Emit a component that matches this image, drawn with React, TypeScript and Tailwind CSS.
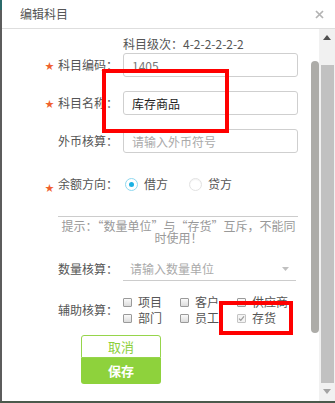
import React from 'react';

const Star = ({ low }: { low?: boolean }) => (
  <span className={`inline-block w-[8px] text-[9px] leading-[9px] text-[#f0612e] mr-[5px] ${low ? 'mt-[6px]' : ''}`}>★</span>
);

const Label = ({ text, star, low }: { text: string; star?: boolean; low?: boolean }) => (
  <div className="w-[121px] shrink-0 flex items-center justify-end pr-[5px] text-[#555]">
    {star && <Star low={low} />}
    <span>{text}</span>
  </div>
);

const Check = ({ label, checked }: { label: string; checked?: boolean }) => (
  <div className="flex items-center h-[16px]">
    <span
      className={`w-[9px] h-[9px] rounded-[1px] border flex items-center justify-center ${
        checked ? 'border-[#c4c4c4] bg-[#f4f4f4]' : 'border-[#9a9a9a] bg-gradient-to-b from-[#fafafa] to-[#dcdcdc]'
      }`}
    >
      {checked && (
        <svg width="7" height="7" viewBox="0 0 7 7">
          <path d="M1 3.6 L2.8 5.3 L6 1.4" fill="none" stroke="#9a9a9a" strokeWidth="1.2" />
        </svg>
      )}
    </span>
    <span className="ml-[6px] text-[#555]">{label}</span>
  </div>
);

export default function App() {
  return (
    <div className="relative w-[335px] h-[403px] flex flex-col overflow-hidden bg-white text-[12px] font-['Noto_Sans_CJK_SC',sans-serif]">
      <div className="flex flex-1 min-h-0">
        {/* backdrop edge */}
        <div className="w-[2px] flex flex-col">
          <div className="h-[10px] bg-[#2b6a6a]" />
          <div className="flex-1 bg-[#5c5c5c]" />
        </div>

        <div className="flex-1 flex flex-col bg-white">
          {/* header */}
          <div className="h-[29px] shrink-0 flex items-center justify-between pl-[18px] pr-[11px] border-b border-[#dedede]">
            <span className="text-[#555] text-[12px]">编辑科目</span>
            <svg width="9" height="9" viewBox="0 0 9 9">
              <path d="M1 1 L8 8 M8 1 L1 8" stroke="#b3b3b3" strokeWidth="1.7" />
            </svg>
          </div>

          <div className="flex flex-1 min-h-0">
            {/* form */}
            <div className="w-[309px] flex flex-col pt-[7px]">
              <div className="ml-[121px] h-[16px] leading-[16px] text-[#555]">科目级次：4-2-2-2-2-2</div>

              <div className="mt-[1px] flex items-center h-[24px]">
                <Label text="科目编码：" star />
                <input
                  readOnly
                  defaultValue="1405"
                  className="w-[175px] h-[24px] border border-[#cfcfcf] rounded-[3px] px-[8px] text-[12px] text-[#777] outline-none"
                />
              </div>

              <div className="mt-[14px] flex items-center h-[24px]">
                <Label text="科目名称：" star />
                <input
                  readOnly
                  defaultValue="库存商品"
                  className="w-[175px] h-[24px] border border-[#cfcfcf] rounded-[3px] px-[8px] text-[12px] text-[#222] outline-none"
                />
              </div>

              <div className="mt-[14px] flex items-center h-[24px]">
                <Label text="外币核算：" />
                <input
                  readOnly
                  placeholder="请输入外币符号"
                  className="w-[175px] h-[24px] border border-[#cfcfcf] rounded-[3px] px-[8px] text-[12px] outline-none placeholder:text-[#aaa]"
                />
              </div>

              <div className="mt-[21px] flex items-center h-[20px]">
                <Label text="余额方向：" star low />
                <span className="ml-[2px] w-[13px] h-[13px] rounded-full border border-[#8fd8ef] flex items-center justify-center">
                  <span className="w-[5px] h-[5px] rounded-full bg-[#1bb1e3]" />
                </span>
                <span className="ml-[6px] text-[#555]">借方</span>
                <span className="ml-[21px] w-[13px] h-[13px] rounded-full border border-[#e2e2e2] shadow-[inset_0_1px_1px_rgba(0,0,0,0.05)]" />
                <span className="ml-[6px] text-[#555]">贷方</span>
              </div>

              <div className="mt-[22px] ml-[56px] w-[240px] border-t border-[#cccccc]" />
              <p className="mt-[3px] ml-[56px] w-[241px] text-center leading-[12px] text-[#999]">
                提示：“数量单位”与“存货”互斥，不能同时使用！
              </p>

              <div className="mt-[13px] flex items-center h-[24px]">
                <Label text="数量核算：" />
                <div className="w-[173px] h-[24px] border-b border-[#cccccc] flex items-center justify-between pl-[7px] pr-[7px]">
                  <span className="text-[#aaa]">请输入数量单位</span>
                  <svg width="7" height="4" viewBox="0 0 7 4">
                    <path d="M0 0 L7 0 L3.5 4 Z" fill="#c0c0c0" />
                  </svg>
                </div>
              </div>

              <div className="mt-[13px] flex items-center">
                <Label text="辅助核算：" />
                <div className="grid grid-cols-[57px_57px_60px]">
                  <Check label="项目" />
                  <Check label="客户" />
                  <Check label="供应商" />
                  <Check label="部门" />
                  <Check label="员工" />
                  <Check label="存货" checked />
                </div>
              </div>

              <div className="mt-[9px] ml-[79px] w-[80px] flex flex-col">
                <button className="h-[23px] border border-[#96d54b] rounded-t-[3px] bg-white text-[#8ccf3a] text-[13px]">
                  取消
                </button>
                <button className="h-[26px] rounded-b-[3px] bg-[#8ed23c] text-white font-bold text-[13px]">
                  保存
                </button>
              </div>
            </div>

            {/* inner scrollbar */}
            <div className="w-[8px] pt-[32px]">
              <div className="h-[272px] rounded-full bg-[#adaca8]" />
            </div>

            {/* outer scrollbar */}
            <div className="w-[16px] bg-[#f1f1f1] flex flex-col items-center">
              <div className="h-[17px] flex items-center justify-center">
                <svg width="8" height="5" viewBox="0 0 8 5">
                  <path d="M0 5 L8 5 L4 0 Z" fill="#505050" />
                </svg>
              </div>
              <div className="mt-[19px] w-[13px] h-[318px] bg-[#c1c1c1]" />
              <div className="h-[17px] flex items-center justify-center">
                <svg width="8" height="5" viewBox="0 0 8 5">
                  <path d="M0 0 L8 0 L4 5 Z" fill="#a3a3a3" />
                </svg>
              </div>
            </div>
          </div>
        </div>
      </div>
      <div className="h-[2px] shrink-0 bg-[#4b5a4c]" />

      {/* annotation boxes */}
      <div className="absolute left-[102px] top-[69px] w-[127px] h-[64px] border-[4px] border-[#ff0000]" />
      <div className="absolute left-[219px] top-[301px] w-[74px] h-[34px] border-[4px] border-[#ff0000]" />
    </div>
  );
}
